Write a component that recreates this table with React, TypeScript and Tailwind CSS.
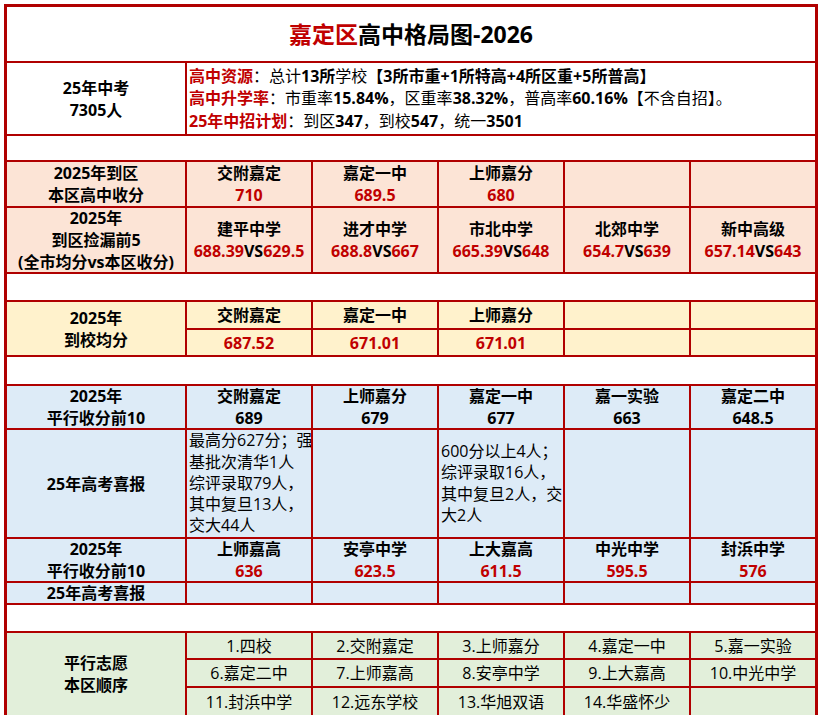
import type { ReactNode } from "react";

const RED = "text-[#c00000]";

const pink = "bg-[#fce4d6]";
const yellow = "bg-[#fff2cc]";
const blue = "bg-[#ddebf7]";
const green = "bg-[#e2efda]";

function Cell({
  bg = "bg-white",
  className = "",
  children,
}: {
  bg?: string;
  className?: string;
  children?: ReactNode;
}) {
  return (
    <div
      className={`${bg} flex items-center justify-center text-center overflow-hidden ${className}`}
    >
      {children}
    </div>
  );
}

function Blank() {
  return <div className="col-span-6 bg-white" />;
}

const daoqu: ([string, string] | null)[] = [
  ["交附嘉定", "710"],
  ["嘉定一中", "689.5"],
  ["上师嘉分", "680"],
  null,
  null,
];

const jianlou: [string, string, string][] = [
  ["建平中学", "688.39", "629.5"],
  ["进才中学", "688.8", "667"],
  ["市北中学", "665.39", "648"],
  ["北郊中学", "654.7", "639"],
  ["新中高级", "657.14", "643"],
];

const daoxiao = [
  ["交附嘉定", "687.52"],
  ["嘉定一中", "671.01"],
  ["上师嘉分", "671.01"],
  ["", ""],
  ["", ""],
];

const pingxing1 = [
  ["交附嘉定", "689"],
  ["上师嘉分", "679"],
  ["嘉定一中", "677"],
  ["嘉一实验", "663"],
  ["嘉定二中", "648.5"],
];

const xibao1: string[][] = [
  ["最高分627分；强", "基批次清华1人", "综评录取79人，", "其中复旦13人，", "交大44人"],
  [],
  ["600分以上4人；", "综评录取16人，", "其中复旦2人，交", "大2人"],
  [],
  [],
];

const pingxing2 = [
  ["上师嘉高", "636"],
  ["安亭中学", "623.5"],
  ["上大嘉高", "611.5"],
  ["中光中学", "595.5"],
  ["封浜中学", "576"],
];

const zhiyuan = [
  "1.四校",
  "2.交附嘉定",
  "3.上师嘉分",
  "4.嘉定一中",
  "5.嘉一实验",
  "6.嘉定二中",
  "7.上师嘉高",
  "8.安亭中学",
  "9.上大嘉高",
  "10.中光中学",
  "11.封浜中学",
  "12.远东学校",
  "13.华旭双语",
  "14.华盛怀少",
  "",
];

export default function App() {
  return (
    <div className="min-h-screen bg-white pt-[4px] pl-[4px] font-['Open_Sans','Noto_Sans_CJK_SC',sans-serif] text-[16px] leading-[22px] text-black">
      <div className="grid w-[814px] grid-cols-[178px_124px_124px_124px_124px_124px] grid-rows-[54px_71px_24px_44px_64px_26px_26px_25px_27px_42px_107px_42px_20px_26px_25px_26px_27px] gap-[2px] border-[3px] border-[#b00000] bg-[#b00000]">
        {/* title */}
        <Cell className="col-span-6 text-[23px] font-bold">
          <span className={RED}>嘉定区</span>
          <span>高中格局图-2026</span>
        </Cell>

        {/* summary */}
        <Cell className="font-bold">
          25年中考
          <br />
          7305人
        </Cell>
        <div className="col-span-5 flex flex-col justify-center bg-white pl-[2px] leading-[22.5px] whitespace-nowrap">
          <p>
            <span className={`${RED} font-bold`}>高中资源</span>：总计
            <b>13所</b>学校<b>【3所市重+1所特高+4所区重+5所普高】</b>
          </p>
          <p>
            <span className={`${RED} font-bold`}>高中升学率</span>：市重率
            <b>15.84%</b>，区重率<b>38.32%</b>，普高率<b>60.16%</b>
            【不含自招】。
          </p>
          <p>
            <span className={`${RED} font-bold`}>25年中招计划</span>：到区
            <b>347</b>，到校<b>547</b>，统一<b>3501</b>
          </p>
        </div>

        <Blank />

        {/* 到区收分 */}
        <Cell bg={pink} className="font-bold">
          2025年到区
          <br />
          本区高中收分
        </Cell>
        {daoqu.map((d, i) => (
          <Cell key={i} bg={pink} className="font-bold">
            {d && (
              <div>
                <p>{d[0]}</p>
                <p className={RED}>{d[1]}</p>
              </div>
            )}
          </Cell>
        ))}

        {/* 捡漏 */}
        <Cell bg={pink} className="font-bold">
          <div>
            <p>2025年</p>
            <p>到区捡漏前5</p>
            <p className="whitespace-nowrap">(全市均分vs本区收分)</p>
          </div>
        </Cell>
        {jianlou.map(([name, a, b]) => (
          <Cell key={name} bg={pink} className="font-bold">
            <div className="whitespace-nowrap">
              <p>{name}</p>
              <p>
                <span className={RED}>{a}</span>VS
                <span className={RED}>{b}</span>
              </p>
            </div>
          </Cell>
        ))}

        <Blank />

        {/* 到校均分 */}
        <Cell bg={yellow} className="row-span-2 font-bold">
          2025年
          <br />
          到校均分
        </Cell>
        {daoxiao.map(([name], i) => (
          <Cell key={`n${i}`} bg={yellow} className="font-bold">
            {name}
          </Cell>
        ))}
        {daoxiao.map(([, v], i) => (
          <Cell key={`v${i}`} bg={yellow} className={`font-bold ${RED}`}>
            {v}
          </Cell>
        ))}

        <Blank />

        {/* 平行收分 1 */}
        <Cell bg={blue} className="font-bold">
          2025年
          <br />
          平行收分前10
        </Cell>
        {pingxing1.map(([name, v]) => (
          <Cell key={name} bg={blue} className="font-bold">
            <div>
              <p>{name}</p>
              <p>{v}</p>
            </div>
          </Cell>
        ))}

        <Cell bg={blue} className="font-bold">
          25年高考喜报
        </Cell>
        {xibao1.map((lines, i) => (
          <div
            key={i}
            className={`${blue} flex flex-col justify-center overflow-hidden pl-[2px] leading-[21.2px] whitespace-nowrap`}
          >
            {lines.map((l) => (
              <p key={l}>{l}</p>
            ))}
          </div>
        ))}

        {/* 平行收分 2 */}
        <Cell bg={blue} className="font-bold">
          2025年
          <br />
          平行收分前10
        </Cell>
        {pingxing2.map(([name, v]) => (
          <Cell key={name} bg={blue} className="font-bold">
            <div>
              <p>{name}</p>
              <p className={RED}>{v}</p>
            </div>
          </Cell>
        ))}

        <Cell bg={blue} className="font-bold leading-[20px]">
          25年高考喜报
        </Cell>
        {[0, 1, 2, 3, 4].map((i) => (
          <Cell key={i} bg={blue} />
        ))}

        <Blank />

        {/* 平行志愿 */}
        <Cell bg={green} className="row-span-3 font-bold">
          平行志愿
          <br />
          本区顺序
        </Cell>
        {zhiyuan.map((z, i) => (
          <Cell key={i} bg={green} className="whitespace-nowrap">
            {z}
          </Cell>
        ))}
      </div>
    </div>
  );
}
